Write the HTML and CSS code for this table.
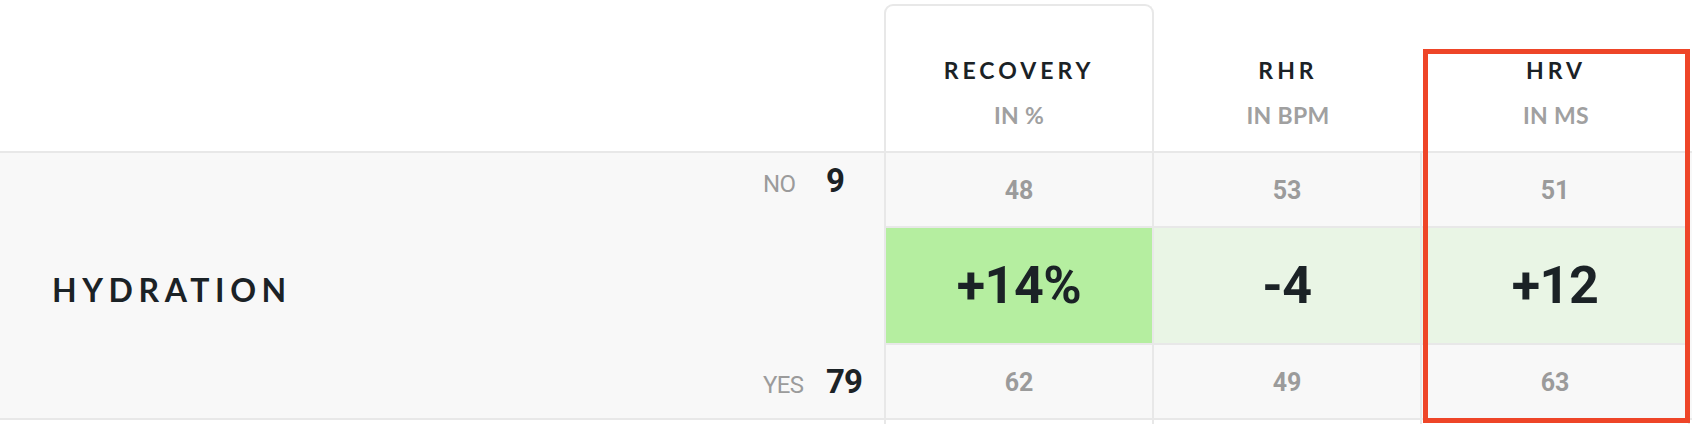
FILE: index.html
```html
<!DOCTYPE html>
<html lang="en">
<head>
<meta charset="utf-8">
<title>Hydration impact</title>
<link rel="stylesheet" href="styles.css">
</head>
<body>
<div class="page">
  <div class="table">
    <div class="head">
      <div class="head-spacer"></div>
      <div class="hcell card">
        <div class="htitle">RECOVERY</div>
        <div class="hunit">IN %</div>
      </div>
      <div class="hcell">
        <div class="htitle">RHR</div>
        <div class="hunit">IN BPM</div>
      </div>
      <div class="hcell">
        <div class="htitle">HRV</div>
        <div class="hunit">IN MS</div>
      </div>
    </div>

    <div class="row">
      <div class="label-cell">
        <div class="label">HYDRATION</div>
        <div class="counts">
          <div class="count"><span class="count-key">NO</span><span class="count-val">9</span></div>
          <div class="count"><span class="count-key">YES</span><span class="count-val">79</span></div>
        </div>
      </div>
      <div class="mcol first">
        <div class="mcell small">48</div>
        <div class="mcell big strong">+14%</div>
        <div class="mcell small">62</div>
      </div>
      <div class="mcol">
        <div class="mcell small">53</div>
        <div class="mcell big soft">-4</div>
        <div class="mcell small">49</div>
      </div>
      <div class="mcol">
        <div class="mcell small">51</div>
        <div class="mcell big soft">+12</div>
        <div class="mcell small">63</div>
      </div>
    </div>

    <div class="tail">
      <div class="tail-spacer"></div>
      <div class="tcell first"></div>
      <div class="tcell"></div>
      <div class="tcell"></div>
    </div>
  </div>
  <div class="highlight"></div>
</div>
</body>
</html>
```

FILE: styles.css
```css
* {
  box-sizing: border-box;
}

html, body {
  margin: 0;
  padding: 0;
  background: #ffffff;
}

body {
  width: 1692px;
  height: 424px;
  overflow: hidden;
  font-family: "Lato", "Liberation Sans", sans-serif;
  color: #1b2226;
}

.page {
  position: relative;
  width: 1692px;
  height: 424px;
}

.table {
  display: flex;
  flex-direction: column;
}

/* Header */
.head {
  display: grid;
  grid-template-columns: 884px 270px 268px 268px;
  height: 151px;
}

.hcell {
  display: flex;
  flex-direction: column;
  align-items: center;
  padding-top: 56px;
}

.hcell.card {
  margin-top: 4px;
  padding-top: 50px;
  border: 2px solid #e8e8e8;
  border-bottom: none;
  border-radius: 9px 9px 0 0;
  background: #ffffff;
}

.htitle {
  font-family: "Lato", "Liberation Sans", sans-serif;
  font-weight: 700;
  font-size: 23px;
  line-height: 28px;
  letter-spacing: 4px;
  color: #1b2226;
}

.hunit {
  margin-top: 17px;
  font-family: "Lato", "Liberation Sans", sans-serif;
  font-weight: 700;
  font-size: 23px;
  line-height: 28px;
  letter-spacing: 0.3px;
  color: #a0a0a0;
}

/* Body row */
.row {
  display: grid;
  grid-template-columns: 884px 270px 268px 268px;
  border-top: 2px solid #e8e8e8;
  border-bottom: 2px solid #e8e8e8;
  background: #f8f8f8;
}

.label-cell {
  display: flex;
  align-items: center;
  justify-content: space-between;
  padding-left: 52px;
}

.label {
  font-family: "Lato", "Liberation Sans", sans-serif;
  font-weight: 700;
  font-size: 32px;
  line-height: 40px;
  letter-spacing: 5.6px;
  margin-top: 8px;
  color: #1b2226;
}

.counts {
  align-self: stretch;
  display: flex;
  flex-direction: column;
  justify-content: space-between;
  width: 121px;
  padding: 11px 0 16px;
}

.count {
  display: flex;
  align-items: baseline;
}

.count-key {
  width: 63px;
  font-family: "Roboto", "Liberation Sans", sans-serif;
  font-weight: 400;
  font-size: 24px;
  line-height: 33px;
  letter-spacing: -0.6px;
  color: #9b9b9b;
}

.count-val {
  font-family: "Roboto", "Liberation Sans", sans-serif;
  font-weight: 700;
  font-size: 33px;
  line-height: 33px;
  letter-spacing: -1px;
  color: #1b2226;
}

.mcol {
  display: flex;
  flex-direction: column;
  border-right: 2px solid #e8e8e8;
}

.mcol.first {
  border-left: 2px solid #e8e8e8;
}

.mcell {
  display: flex;
  align-items: center;
  justify-content: center;
  font-family: "Roboto", "Liberation Sans", sans-serif;
  font-weight: 700;
}

.mcell.small {
  height: 73px;
  font-size: 25px;
  color: #9b9b9b;
  padding-top: 1px;
}

.mcell.big {
  height: 119px;
  border-top: 2px solid #e8e8e8;
  border-bottom: 2px solid #e8e8e8;
  font-size: 52px;
  letter-spacing: -0.5px;
  color: #1b2226;
}

.mcell.strong {
  background: #b5eea0;
}

.mcell.soft {
  background: #e9f5e5;
}

/* Start of the following row */
.tail {
  display: grid;
  grid-template-columns: 884px 270px 268px 268px;
  height: 20px;
}

.tcell {
  border-right: 2px solid #e8e8e8;
}

.tcell.first {
  border-left: 2px solid #e8e8e8;
}

/* Highlight frame over the HRV column */
.highlight {
  position: absolute;
  left: 1423px;
  top: 49px;
  width: 267px;
  height: 374px;
  border: 5px solid #ee4528;
  pointer-events: none;
}
```
